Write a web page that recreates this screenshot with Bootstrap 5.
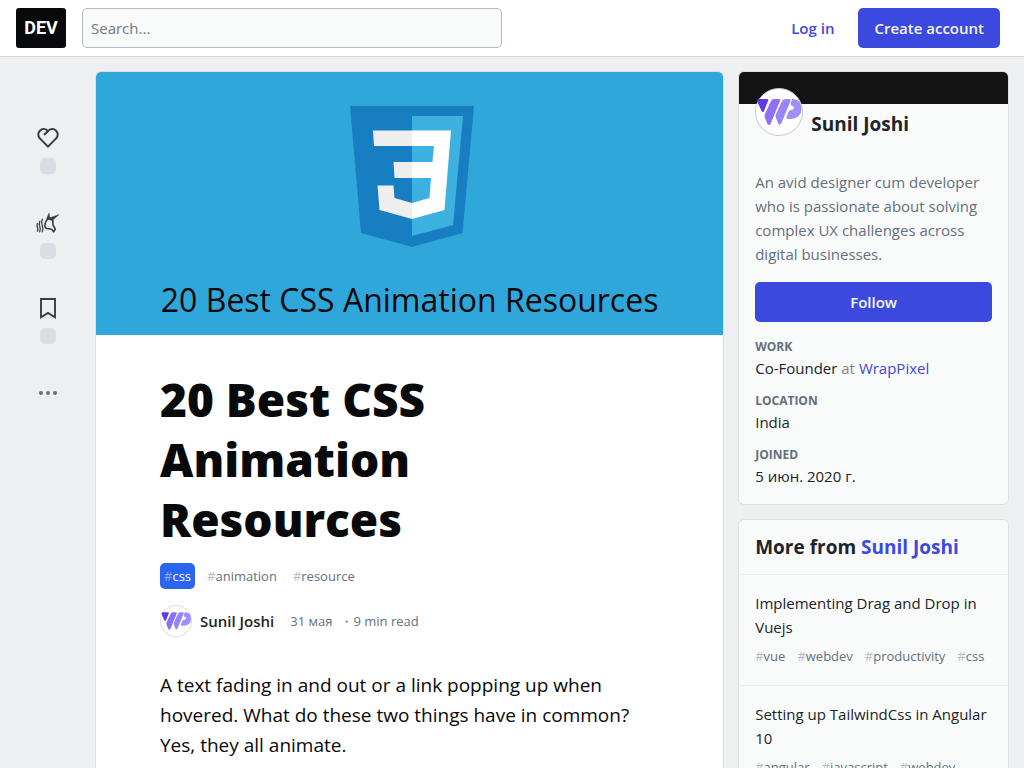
<!DOCTYPE html>
<html lang="en">
<head>
<meta charset="utf-8">
<meta name="viewport" content="width=device-width, initial-scale=1">
<title>20 Best CSS Animation Resources - DEV</title>
<link href="https://cdn.jsdelivr.net/npm/bootstrap@5.3.0/dist/css/bootstrap.min.css" rel="stylesheet">
<style>
:root { --brand: #3b49df; --ink: #202428; --muted: #64707d; --soft: #b5bdc4; --line: #dfe0e2; }
body { background: #eeeff1; color: var(--ink); font: 15px/24px "Open Sans", "Noto Sans", sans-serif; }
a { color: inherit; text-decoration: none; }
.topbar { background: #fff; border-bottom: 1px solid #d5d6d7; }
.dev-logo { width: 50px; height: 40px; background: #08090a; color: #fff; border-radius: 3px; font: bold 18px/40px Roboto, "Liberation Sans", sans-serif; }
.search-form { width: 420px; }
.search-form .form-control { height: 40px; padding: 0 8px; font-size: 15px; background: #f9fafa; border-color: #b5bdc4; border-radius: 5px; }
.search-form .form-control::placeholder { color: #717981; }
.btn-brand { --bs-btn-bg: var(--brand); --bs-btn-color: #f5f6ff; --bs-btn-hover-bg: #2f3ab2; --bs-btn-hover-color: #fff; height: 40px; padding: 0 16px; border: 0; border-radius: 5px; font-size: 15px; font-weight: 600; line-height: 40px; }
.login { color: var(--brand); font-weight: 600; }
.page { display: grid; grid-template-columns: 64px minmax(0, 7fr) minmax(0, 3fr); gap: 16px; padding: 15px 16px; }
.rail { padding-top: 47px; gap: 30px; }
.rail button { background: none; border: 0; padding: 7px 0 0; color: #363d44; }
.rail .count { width: 16px; height: 16px; border-radius: 5px; background: #d9dce1; margin-top: 8px; }
.panel { border-radius: 5px; box-shadow: 0 0 0 1px var(--line); overflow: hidden; background: #f9fafa; }
.post { background: #fff; }
.cover { aspect-ratio: 1000 / 420; background: #2fa7db; color: #08090a; font-size: 32px; line-height: 40px; padding: 34px 0 15px; }
.post-body { padding: 34px 64px 32px; }
.post-body h1 { font-size: 46px; line-height: 60px; font-weight: 800; color: #08090a; max-width: 360px; margin-bottom: 14px; }
.tag { color: var(--muted); font-size: 13px; line-height: 26px; }
.tag span { color: var(--soft); }
.post-tag { padding: 0 4px; border-radius: 5px; }
.post-tag.active { background: #2965f1; color: #fff; }
.post-tag.active span { color: #8eabf7; }
.lede { font-size: 19px; line-height: 30px; color: #08090a; margin-top: 33px; }
.byline { font-size: 13px; color: var(--muted); }
.byline .author { font-size: 15px; font-weight: 600; color: var(--ink); }
.banner { height: 32px; background: #131313; }
.profile { padding: 0 16px 16px; }
.profile-head { margin-top: -16px; }
.name { font-size: 19px; line-height: 24px; font-weight: 700; }
.bio { color: var(--muted); margin: 34px 0 16px; }
.facts dt { font-size: 12px; line-height: 18px; font-weight: 700; color: var(--muted); text-transform: uppercase; }
.facts dd { margin: 0 0 12px; }
.more h2 { padding: 15px 16px; font-size: 19px; font-weight: 700; line-height: 24px; }
.more-item { border-top: 1px solid #eaebec; padding: 16px; }
.accent { color: var(--brand); }
</style>
</head>
<body>
<svg width="0" height="0" class="position-absolute" aria-hidden="true">
  <symbol id="avatar" viewBox="0 0 48 48">
    <circle cx="24" cy="24" r="23.5" fill="#fff" stroke="#c9c9cb"/>
    <path d="M4 11h8q2 0 1 2L9 23q-1 2-2.500 0L2.500 14q-1-3 1.500-3z" fill="#5f3be3"/>
    <path d="M19 11h5q2 0 1 2L15.500 36q-1.500 2-3 0L10 30q-1-2 0-4l6-13q1-2 3-2z" fill="#8f6ff7"/>
    <path d="M30.500 11h4q1.500 0 1 2L26.500 35q-1.500 3-3 1L21 30q-1-2 0-4l6-13q1-2 3.500-2z" fill="#9a84fa"/>
    <path d="M37 11q9.500 0 9.500 9.500T36 31h-3q-2 0-1.500-2l2-5q.5-2 3-2 2.500 0 2.500-2t-2.500-2.500l-1-1.500 1.500-5z" fill="#a08ffb"/>
  </symbol>
</svg>

<header class="topbar d-flex align-items-center py-2 px-3">
  <a href="#" class="dev-logo text-center flex-shrink-0 me-3">DEV</a>
  <form class="search-form"><input type="search" class="form-control" placeholder="Search..." aria-label="Search"></form>
  <nav class="d-flex align-items-center gap-4 ms-auto me-2">
    <a href="#" class="login">Log in</a>
    <a href="#" class="btn btn-brand">Create account</a>
  </nav>
</header>

<div class="page">
  <aside class="rail d-flex flex-column align-items-center" aria-label="Reactions">
    <button type="button" class="d-flex flex-column align-items-center" aria-label="Like">
      <svg width="24" height="24" viewBox="0 0 24 24" fill="currentColor"><path d="M21.179 12.794l.013.014L12 22l-9.192-9.192.013-.014A6.500 6.500 0 0 1 12 3.640a6.500 6.500 0 0 1 9.179 9.154zM4.575 5.383a4.500 4.500 0 0 0 0 6.364L12 19.172l7.425-7.425a4.500 4.500 0 1 0-6.364-6.364L8.818 9.626 7.404 8.210l3.162-3.162a4.500 4.500 0 0 0-5.990.334z"/></svg>
      <span class="count"></span>
    </button>
    <button type="button" class="d-flex flex-column align-items-center" aria-label="Unicorn">
      <svg width="24" height="24" viewBox="0 0 24 24" fill="none" stroke="currentColor" stroke-linejoin="round" stroke-linecap="round"><path d="M12.600 7C10.500 9 8.800 12 8.800 14.500c0 1.600.8 2.600 2.200 3l4.500.8 2.200 2.500 1.600-2.600-2.300-4.200-.2-4.500" stroke-width="1.600"/><path d="M10.700 7.500 13 2.200l.8 4.600L22.900 3.700l-6.600 5.800-3.300-.8z" fill="currentColor" stroke-width=".5"/><path d="M6.400 8.200c-1.300 2.300-1.200 4.300-.2 6.300 1 2.300.8 4.300 0 6.300M3.800 10.200c-.9 2-.7 3.500 0 5.200.8 2 .6 3.600-.1 5.400M1.300 12.700c-.5 1.500-.3 2.600.2 3.900.5 1.300.4 2.400 0 3.600" stroke-width="1.300"/></svg>
      <span class="count"></span>
    </button>
    <button type="button" class="d-flex flex-column align-items-center" aria-label="Save">
      <svg width="24" height="24" viewBox="0 0 24 24" fill="none" stroke="currentColor" stroke-width="1.900"><path d="M5 3h14v18.300l-7-4.400-7 4.400z"/></svg>
      <span class="count"></span>
    </button>
    <button type="button" class="d-flex flex-column align-items-center" aria-label="More options">
      <svg width="24" height="24" viewBox="0 0 24 24" fill="#64707d"><circle cx="5" cy="12" r="2"/><circle cx="12" cy="12" r="2"/><circle cx="19" cy="12" r="2"/></svg>
    </button>
  </aside>

  <main>
    <article class="panel post">
      <div class="cover d-flex flex-column align-items-center justify-content-between">
        <svg width="128" height="141" viewBox="-4 0 128 141" role="img" aria-label="CSS3 logo">
          <path d="M0 0h124l-11.500 127L62 141 11 127z" fill="#177fc1"/>
          <path d="M62 10h51l-10 109-41 11z" fill="#3db2e1"/>
          <path d="M23 24.500h39V40H24zM43.500 56H62v16H44.500zM27.500 79.500h16L44.500 92 62 97v16l-32.500-9z" fill="#eee"/>
          <path d="M62 24.500h39L94.500 104 62 113V97l17.500-5L81 72H62V56h20.500L84 40H62z" fill="#fff"/>
        </svg>
        <div>20 Best CSS Animation Resources</div>
      </div>
      <div class="post-body">
        <h1>20 Best CSS Animation Resources</h1>
        <div class="d-flex gap-2 mb-3">
          <a href="#" class="tag post-tag active"><span>#</span>css</a>
          <a href="#" class="tag post-tag"><span>#</span>animation</a>
          <a href="#" class="tag post-tag"><span>#</span>resource</a>
        </div>
        <div class="byline d-flex align-items-center">
          <svg width="32" height="32" class="me-2" aria-hidden="true"><use href="#avatar"/></svg>
          <a href="#" class="author me-3">Sunil Joshi</a>
          <time datetime="2020-05-31" class="me-2">31 мая</time>
          <span>・9 min read</span>
        </div>
        <p class="lede">A text fading in and out or a link popping up when hovered. What do these two things have in common? Yes, they all animate.</p>
      </div>
    </article>
  </main>

  <aside class="d-flex flex-column gap-3">
    <section class="panel">
      <div class="banner"></div>
      <div class="profile">
        <a href="#" class="profile-head d-flex position-relative">
          <svg width="48" height="48" class="me-2 flex-shrink-0" aria-hidden="true"><use href="#avatar"/></svg>
          <span class="name align-self-end">Sunil Joshi</span>
        </a>
        <p class="bio">An avid designer cum developer who is passionate about solving complex UX challenges across digital businesses.</p>
        <button type="button" class="btn btn-brand w-100">Follow</button>
        <dl class="facts mt-3 mb-0">
          <dt>Work</dt><dd>Co-Founder <span class="text-black-50">at</span> <a href="#" class="accent">WrapPixel</a></dd>
          <dt>Location</dt><dd>India</dd>
          <dt>Joined</dt><dd class="mb-0">5 июн. 2020 г.</dd>
        </dl>
      </div>
    </section>
    <section class="panel more">
      <h2 class="mb-0">More from <a href="#" class="accent">Sunil Joshi</a></h2>
      <div class="more-item">
        <a href="#">Implementing Drag and Drop in Vuejs</a>
        <div class="tag d-flex pt-1"><a href="#" class="me-2 pe-1"><span>#</span>vue</a><a href="#" class="me-2 pe-1"><span>#</span>webdev</a><a href="#" class="me-2 pe-1"><span>#</span>productivity</a><a href="#"><span>#</span>css</a></div>
      </div>
      <div class="more-item">
        <a href="#">Setting up TailwindCss in Angular 10</a>
        <div class="tag d-flex pt-1"><a href="#" class="me-2 pe-1"><span>#</span>angular</a><a href="#" class="me-2 pe-1"><span>#</span>javascript</a><a href="#"><span>#</span>webdev</a></div>
      </div>
    </section>
  </aside>
</div>
<script src="https://cdn.jsdelivr.net/npm/bootstrap@5.3.0/dist/js/bootstrap.bundle.min.js"></script>
</body>
</html>
